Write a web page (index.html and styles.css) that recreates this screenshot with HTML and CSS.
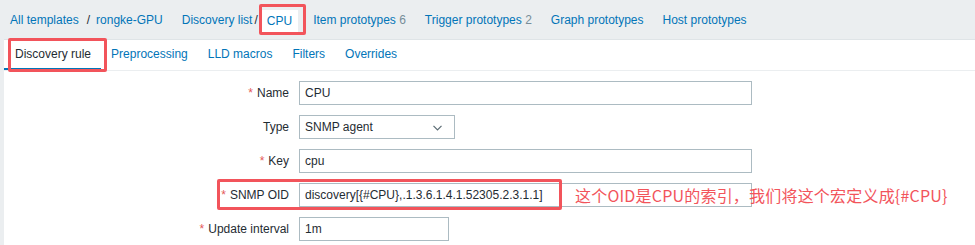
FILE: index.html
```html
<!DOCTYPE html>
<html>
<head>
	<meta charset="UTF-8">
	<title>Discovery rule</title>
	<link rel="stylesheet" href="styles.css">
</head>
<body>
	<div class="page">
		<nav class="crumbs">
			<a class="link">All templates</a><span class="sep">/</span><a class="link">rongke-GPU</a>
			<a class="link wide">Discovery list</a><span class="sep tight">/</span><a class="link current">CPU</a>
			<a class="link after-current">Item prototypes <span class="count">6</span></a>
			<a class="link wide">Trigger prototypes <span class="count">2</span></a>
			<a class="link wide">Graph prototypes</a>
			<a class="link wide">Host prototypes</a>
		</nav>

		<div class="panel">
			<ul class="tabs">
				<li class="tab active">Discovery rule</li>
				<li class="tab">Preprocessing</li>
				<li class="tab">LLD macros</li>
				<li class="tab">Filters</li>
				<li class="tab">Overrides</li>
			</ul>

			<div class="form">
				<label class="label"><span class="req">*</span>Name</label>
				<div class="field"><div class="input long">CPU</div></div>

				<label class="label">Type</label>
				<div class="field">
					<div class="input select">SNMP agent
						<svg class="chevron" width="9" height="6" viewBox="0 0 9 6"><path d="M0.5 0.8 L4.5 4.8 L8.5 0.8" fill="none" stroke="#5b6b73" stroke-width="1.2"/></svg>
					</div>
				</div>

				<label class="label"><span class="req">*</span>Key</label>
				<div class="field"><div class="input long">cpu</div></div>

				<label class="label"><span class="req">*</span>SNMP OID</label>
				<div class="field"><div class="input long">discovery[{#CPU},.1.3.6.1.4.1.52305.2.3.1.1]</div></div>

				<label class="label"><span class="req">*</span>Update interval</label>
				<div class="field"><div class="input short">1m</div></div>
			</div>
		</div>

		<!-- annotations drawn over the screenshot -->
		<div class="mark mark-cpu"></div>
		<div class="mark mark-tab"></div>
		<div class="mark mark-oid"></div>
		<div class="note">这个OID是CPU的索引，我们将这个宏定义成{#CPU}</div>
	</div>
</body>
</html>
```

FILE: styles.css
```css
html,
body {
	margin: 0;
	padding: 0;
}

body {
	background: #ebeef0;
	font-family: "Liberation Sans", Arial, sans-serif;
	font-size: 12px;
	color: #1f2c33;
}

.page {
	position: relative;
	width: 975px;
	height: 245px;
	overflow: hidden;
}

/* breadcrumbs */
.crumbs {
	display: flex;
	align-items: center;
	height: 39px;
	padding-left: 10px;
}

.link {
	color: #0275b8;
	white-space: nowrap;
}

.sep {
	margin: 0 6px 0 8px;
	color: #1f2c33;
}

.sep.tight {
	margin: 0 3px 0 2px;
}

.wide {
	margin-left: 19px;
}

.current {
	background: #fff;
	padding: 4px 6px 5px;
	margin-top: 3px;
}

.after-current {
	margin-left: 15px;
}

.count {
	color: #768d99;
}

/* white panel */
.panel {
	margin-left: 4px;
	height: 206px;
	background: #fff;
	border-top: 1px solid #dfe4e7;
}

.tabs {
	display: flex;
	margin: 0;
	padding: 0;
	list-style: none;
	border-bottom: 1px solid #ebeef0;
}

.tab {
	height: 28px;
	line-height: 28px;
	padding: 0 10px;
	color: #0275b8;
	border-bottom: 2px solid transparent;
}

.tab:first-child {
	padding-left: 11px;
}

.tab.active {
	color: #1f2c33;
	border-bottom-color: #0275b8;
}

/* form grid */
.form {
	display: grid;
	grid-template-columns: 285px 1fr;
	column-gap: 10px;
	row-gap: 10px;
	padding-top: 10px;
}

.label {
	height: 24px;
	line-height: 24px;
	text-align: right;
}

.req {
	color: #e45959;
	margin-right: 4px;
}

.input {
	box-sizing: border-box;
	height: 24px;
	line-height: 22px;
	border: 1px solid #acbbc2;
	padding: 0 5px;
	background: #fff;
}

.long {
	width: 453px;
}

.short {
	width: 150px;
}

.select {
	position: relative;
	width: 156px;
}

.chevron {
	position: absolute;
	right: 12px;
	top: 9px;
}

/* red annotations */
.mark {
	position: absolute;
	border: 3px solid #f2545b;
	border-radius: 2px;
	box-sizing: border-box;
}

.mark-cpu {
	left: 259px;
	top: 4px;
	width: 47px;
	height: 31px;
}

.mark-tab {
	left: 8px;
	top: 38px;
	width: 99px;
	height: 34px;
}

.mark-oid {
	left: 217px;
	top: 179px;
	width: 345px;
	height: 31px;
}

.note {
	position: absolute;
	left: 575px;
	top: 184px;
	font-family: "Noto Sans CJK SC", sans-serif;
	font-size: 16px;
	letter-spacing: 0.2px;
	line-height: 22px;
	color: #f2545b;
	white-space: nowrap;
}
```
